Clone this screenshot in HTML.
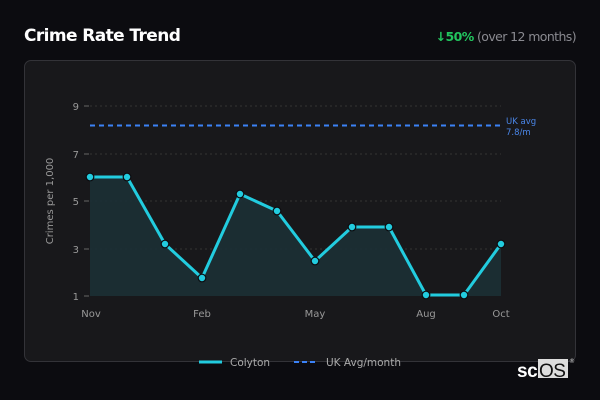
<!DOCTYPE html>
<html><head><meta charset="utf-8"><style>
body{margin:0;width:600px;height:400px;background:#0c0c10;font-family:"Liberation Sans","DejaVu Sans",sans-serif;overflow:hidden;position:relative}
.t{position:absolute;left:24px;top:26px;color:#fff;font-weight:bold;font-size:17px;font-family:"DejaVu Sans",sans-serif;letter-spacing:-0.6px}
.r{position:absolute;right:24px;top:29px;font-size:12.5px;color:#8a8a90;font-family:"DejaVu Sans",sans-serif;letter-spacing:-0.6px}
.r b{color:#22c55e}
.card{position:absolute;left:24px;top:60px;width:550px;height:300px;border:1px solid #333338;border-radius:7px;background:#18181b}
svg{position:absolute;left:0;top:0}
</style></head><body>
<div class="t">Crime Rate Trend</div>
<div class="r"><b>↓50%</b> (over 12 months)</div>
<div class="card"></div>
<svg width="600" height="400" font-family="DejaVu Sans,sans-serif">
<g stroke="#333" stroke-dasharray="2,3" stroke-width="1">
<line x1="90" y1="106" x2="501" y2="106"/><line x1="90" y1="154" x2="501" y2="154"/><line x1="90" y1="201" x2="501" y2="201"/><line x1="90" y1="249" x2="501" y2="249"/>
</g>
<g stroke="#666" stroke-width="1"><line x1="84" y1="106" x2="89" y2="106"/><line x1="84" y1="154" x2="89" y2="154"/><line x1="84" y1="201" x2="89" y2="201"/><line x1="84" y1="249" x2="89" y2="249"/><line x1="84" y1="296" x2="89" y2="296"/></g>
<g fill="#999" font-size="10" text-anchor="end"><text x="79" y="110">9</text><text x="79" y="158">7</text><text x="79" y="205">5</text><text x="79" y="253">3</text><text x="79" y="300">1</text></g>
<text transform="translate(53,201) rotate(-90)" fill="#999" font-size="10" text-anchor="middle">Crimes per 1,000</text>
<g fill="#999" font-size="10" text-anchor="middle"><text x="91" y="317">Nov</text><text x="202" y="317">Feb</text><text x="315" y="317">May</text><text x="426" y="317">Aug</text><text x="501" y="317">Oct</text></g>
<line x1="90" y1="125.5" x2="501" y2="125.5" stroke="#3b82f6" stroke-width="2" stroke-dasharray="5,4"/>
<text x="506" y="124" fill="#4a86e8" font-size="8.5">UK avg</text><text x="506" y="135" fill="#4a86e8" font-size="8.5">7.8/m</text>
<path d="M90 177L127 177L165 244L202 278L240 194L277 211L315 261L352 227L389 227L426 295L464 295L501 244L501 296L90 296Z" fill="#1c3035" opacity="0.9"/>
<path d="M90 177L127 177L165 244L202 278L240 194L277 211L315 261L352 227L389 227L426 295L464 295L501 244" fill="none" stroke="#22ccdf" stroke-width="3" stroke-linejoin="round"/>
<g fill="#22ccdf" stroke="#0c0c10" stroke-width="1.2">
<circle cx="90" cy="177" r="3.8"/><circle cx="127" cy="177" r="3.8"/><circle cx="165" cy="244" r="3.8"/><circle cx="202" cy="278" r="3.8"/><circle cx="240" cy="194" r="3.8"/><circle cx="277" cy="211" r="3.8"/><circle cx="315" cy="261" r="3.8"/><circle cx="352" cy="227" r="3.8"/><circle cx="389" cy="227" r="3.8"/><circle cx="426" cy="295" r="3.8"/><circle cx="464" cy="295" r="3.8"/><circle cx="501" cy="244" r="3.8"/>
</g>
<line x1="199" y1="362" x2="222" y2="362" stroke="#22ccdf" stroke-width="3"/>
<text x="230" y="366" fill="#aaa" font-size="10.5">Colyton</text>
<line x1="294" y1="362" x2="318" y2="362" stroke="#3b82f6" stroke-width="2" stroke-dasharray="5,3"/>
<text x="326" y="366" fill="#aaa" font-size="10.5">UK Avg/month</text>
<rect x="538" y="359" width="30" height="19" fill="#ddd"/>
<text x="517" y="377" fill="#fff" font-size="19" font-weight="bold" font-family="Liberation Sans,sans-serif" letter-spacing="-0.5">sc</text>
<text x="539" y="377" fill="#111" font-size="19" font-family="Liberation Sans,sans-serif" letter-spacing="-0.5">OS</text>
<text x="569" y="363" fill="#ccc" font-size="6">®</text>
</svg>
</body></html>
